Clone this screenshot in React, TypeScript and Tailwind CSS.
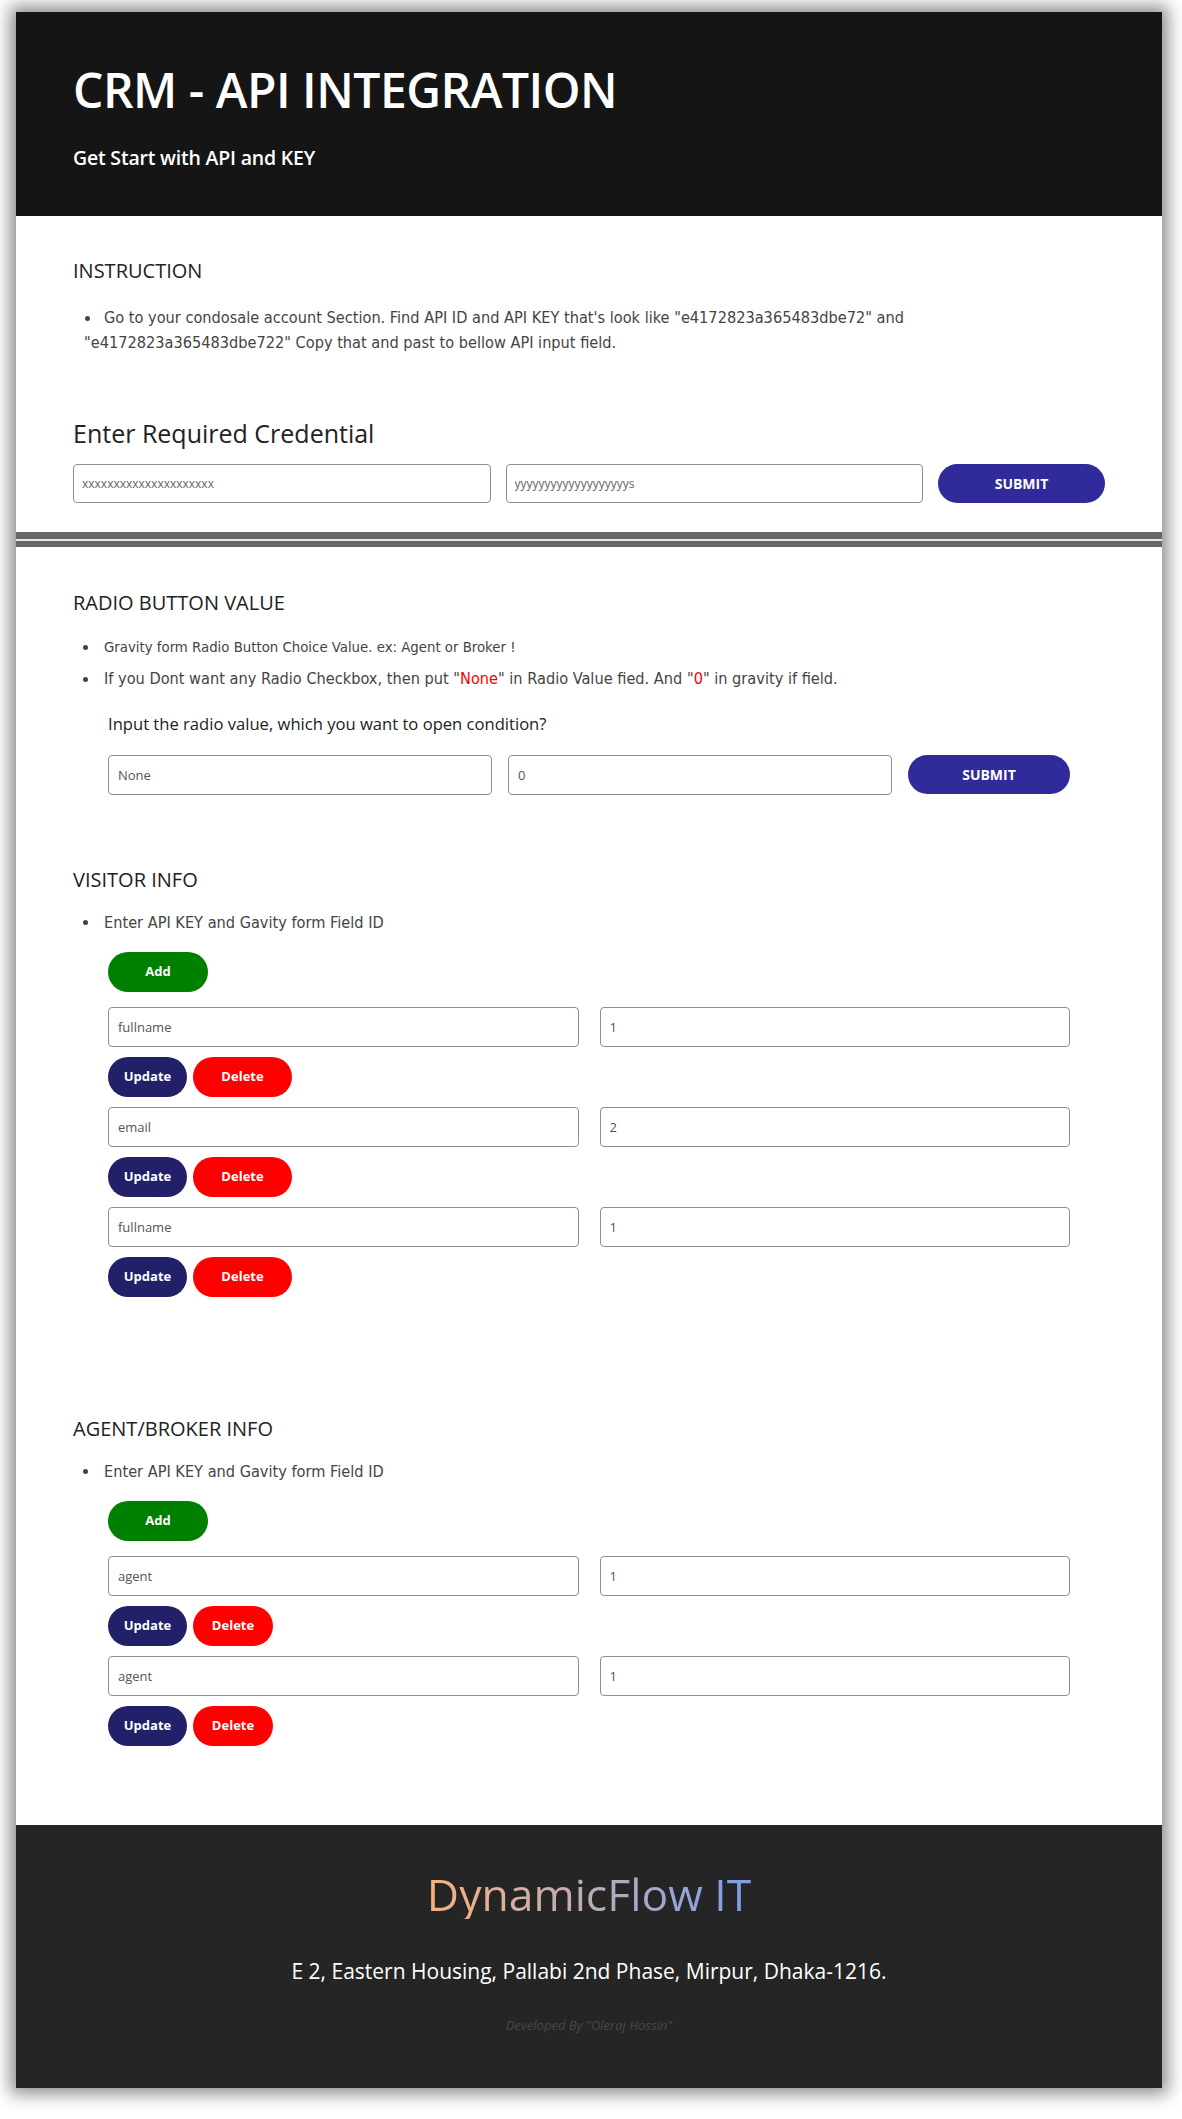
import React from 'react';

const sans = "font-['Open_Sans',sans-serif]";
const deja = "font-['DejaVu_Sans_Condensed','DejaVu_Sans',sans-serif] font-stretch-condensed";

type Pair = { key: string; id: string };

const visitorRows: Pair[] = [
  { key: 'fullname', id: '1' },
  { key: 'email', id: '2' },
  { key: 'fullname', id: '1' },
];

const agentRows: Pair[] = [
  { key: 'agent', id: '1' },
  { key: 'agent', id: '1' },
];

function Field({ value, small }: { value: string; small?: boolean }) {
  return (
    <input
      readOnly
      value={value}
      className={`w-full rounded-[4px] border border-[#8f8f8f] bg-white outline-none ${sans} ${
        small ? 'h-[39px] px-[8px] text-[12px] text-[#666]' : 'h-[40px] px-[9px] text-[13px] text-[#555]'
      }`}
    />
  );
}

function Bullet({ children, className = '' }: { children: React.ReactNode; className?: string }) {
  return (
    <li className={`flex items-start ${className}`}>
      <span className="mt-[10px] ml-[10px] mr-[16px] inline-block h-[5px] w-[5px] shrink-0 rounded-full bg-[#444]" />
      <span>{children}</span>
    </li>
  );
}

function Heading({ children, className = '' }: { children: React.ReactNode; className?: string }) {
  return <h2 className={`${sans} text-[20px] leading-[28px] text-[#222] ${className}`}>{children}</h2>;
}

function PairList({ rows, deleteWidth }: { rows: Pair[]; deleteWidth: string }) {
  return (
    <div className="flex flex-col px-[35px] pt-[17px]">
      <button className={`${sans} block h-[40px] w-[100px] rounded-full bg-[#008000] text-[13px] font-bold text-white`}>
        Add
      </button>
      <div className="mt-[15px] flex flex-col gap-[10px]">
        {rows.map((row, i) => (
          <div key={i} className="flex flex-col gap-[10px]">
            <div className="grid grid-cols-2 gap-[21px]">
              <Field value={row.key} />
              <Field value={row.id} />
            </div>
            <div className="flex gap-[6px]">
              <button className={`${sans} h-[40px] w-[79px] rounded-full bg-[#23206a] text-[13px] font-bold text-white`}>
                Update
              </button>
              <button className={`${sans} h-[40px] ${deleteWidth} rounded-full bg-[#ff0000] text-[13px] font-bold text-white`}>
                Delete
              </button>
            </div>
          </div>
        ))}
      </div>
    </div>
  );
}

export default function App() {
  return (
    <div className={`min-h-[2119px] bg-white pt-[12px] pb-[29px] ${sans}`}>
      <div className="ml-4 w-[1146px] shadow-[0_0_16px_6px_rgba(0,0,0,0.45)]">
        {/* Header */}
        <header className="bg-[#151515] px-[57px] pt-[49px] pb-[44px] text-white">
          <h1 className="text-[48px] font-semibold leading-[58px] tracking-[-0.5px]">CRM - API INTEGRATION</h1>
          <p className="mt-[25px] text-[19.5px] font-semibold leading-[28px] tracking-[-0.2px]">Get Start with API and KEY</p>
        </header>

        {/* Instruction */}
        <section className="bg-white px-[57px] pt-[41px] pb-[29px]">
          <Heading>INSTRUCTION</Heading>
          <ul className={`mt-[20px] ${deja} text-[16.2px] leading-[25px] text-[#444]`}>
            <li className="pl-[11px]">
              <span className="mr-[14px] ml-[1px] inline-block h-[5px] w-[5px] rounded-full bg-[#444] align-middle" />
              Go to your condosale account Section. Find API ID and API KEY that's look like "e4172823a365483dbe72" and
              <br />
              "e4172823a365483dbe722" Copy that and past to bellow API input field.
            </li>
          </ul>
          <h2 className="mt-[61px] text-[25px] leading-[34px] text-[#222]">Enter Required Credential</h2>
          <div className="mt-[14px] grid grid-cols-[5fr_5fr_2fr] gap-[15px]">
            <Field small value="xxxxxxxxxxxxxxxxxxxxx" />
            <Field small value="yyyyyyyyyyyyyyyyyyys" />
            <button className="h-[39px] rounded-full bg-[#312a9b] text-[14px] font-bold text-white">SUBMIT</button>
          </div>
        </section>

        {/* divider between cards */}
        <div className="flex flex-col">
          <div className="h-[7px] bg-[#686868]" />
          <div className="h-[2px] bg-[#e6e6e6]" />
          <div className="h-[6px] bg-[#686868]" />
        </div>

        {/* Settings */}
        <section className="bg-white px-[57px] pt-[42px] pb-[79px]">
          <Heading>RADIO BUTTON VALUE</Heading>
          <ul className={`mt-[18px] ${deja} leading-[24px] text-[#444]`}>
            <Bullet className="text-[14.8px]">Gravity form Radio Button Choice Value. ex: Agent or Broker !</Bullet>
            <Bullet className="mt-[8px] text-[16.2px]">
              If you Dont want any Radio Checkbox, then put "<span className="text-[#ff0000]">None</span>" in Radio Value
              fied. And "<span className="text-[#ff0000]">0</span>" in gravity if field.
            </Bullet>
          </ul>
          <div className="px-[35px]">
            <p className="mt-[21px] text-[16.6px] font-medium leading-[24px] text-[#222]">
              Input the radio value, which you want to open condition?
            </p>
            <div className="mt-[19px] grid grid-cols-[1fr_1fr_162px] gap-4">
              <Field value="None" />
              <Field value="0" />
              <button className="h-[39px] rounded-full bg-[#312a9b] text-[14px] font-bold text-white">SUBMIT</button>
            </div>
          </div>

          <Heading className="mt-[71px]">VISITOR INFO</Heading>
          <ul className={`mt-[16px] ${deja} text-[16.2px] leading-[25px] text-[#444]`}>
            <Bullet>Enter API KEY and Gavity form Field ID</Bullet>
          </ul>
          <PairList rows={visitorRows} deleteWidth="w-[99px]" />

          <Heading className="mt-[118px]">AGENT/BROKER INFO</Heading>
          <ul className={`mt-[16px] ${deja} text-[16.2px] leading-[25px] text-[#444]`}>
            <Bullet>Enter API KEY and Gavity form Field ID</Bullet>
          </ul>
          <PairList rows={agentRows} deleteWidth="w-[80px]" />
        </section>

        {/* Footer */}
        <footer className="bg-[#252525] pt-[44px] pb-[54px] text-center">
          <h3 className="inline-block bg-gradient-to-r from-[#f9b279] to-[#7b9de8] bg-clip-text text-[44.5px] font-medium leading-[50px] text-transparent">
            DynamicFlow IT
          </h3>
          <p className="mt-[37px] text-[21px] leading-[30px] text-white">
            E 2, Eastern Housing, Pallabi 2nd Phase, Mirpur, Dhaka-1216.
          </p>
          <p className="mt-[30px] text-[13px] italic leading-[18px] text-[#484848]">Developed By "Oleraj Hossin"</p>
        </footer>
      </div>
    </div>
  );
}
